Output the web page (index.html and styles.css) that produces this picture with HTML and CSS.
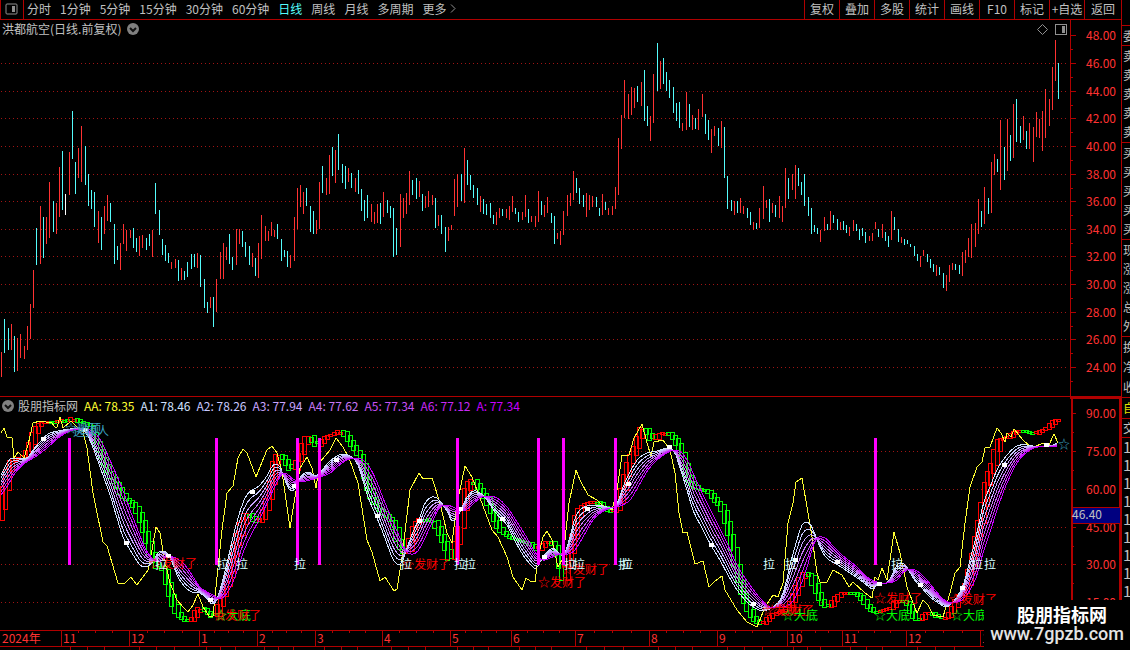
FILE: index.html
```html
<!DOCTYPE html>
<html lang="zh-CN">
<head>
    <meta charset="UTF-8">
    <meta name="viewport" content="width=device-width, initial-scale=1.0">
    <title>洪都航空 日线</title>
    <link rel="stylesheet" href="styles.css">
</head>
<body>
    <div class="app">
        <main class="main">
            <header class="toolbar">
                <button class="layout-btn" aria-label="布局">
                    <svg width="13" height="12" viewBox="0 0 13 12"><rect x="1" y="1" width="11" height="10" rx="1" class="icon-line"/><rect x="7" y="3" width="3" height="6" class="icon-fill"/></svg>
                </button>
                <nav class="periods">
                    <button>分时</button>
                    <button>1分钟</button>
                    <button>5分钟</button>
                    <button>15分钟</button>
                    <button>30分钟</button>
                    <button>60分钟</button>
                    <button class="active">日线</button>
                    <button>周线</button>
                    <button>月线</button>
                    <button>多周期</button>
                    <button class="more">更多<svg width="6" height="9" viewBox="0 0 6 9"><path d="M1 0.5L5 4.5L1 8.5" class="icon-line"/></svg></button>
                </nav>
                <div class="tools">
                    <button>复权</button>
                    <button>叠加</button>
                    <button>多股</button>
                    <button>统计</button>
                    <button>画线</button>
                    <button>F10</button>
                    <button>标记</button>
                    <button>+自选</button>
                    <button>返回</button>
                </div>
            </header>

            <section class="pane price-pane">
                <div class="pane-title">
                    <span>洪都航空(日线.前复权)</span>
                    <svg width="12" height="12" viewBox="0 0 12 12"><circle cx="6" cy="6" r="6" class="disc"/><path d="M3 5L6 8L9 5" class="disc-arrow"/></svg>
                </div>
                <svg id="price" class="chart" viewBox="0 20 1121 377"></svg>
            </section>

            <section class="pane">
                <div class="pane-title legend">
                    <svg width="12" height="12" viewBox="0 0 12 12"><circle cx="6" cy="6" r="6" class="disc"/><path d="M3 5L6 8L9 5" class="disc-arrow"/></svg>
                    <span class="name">股朋指标网</span>
                    <span class="val aa">AA: 78.35</span>
                    <span class="val a1">A1: 78.46</span>
                    <span class="val a2">A2: 78.26</span>
                    <span class="val a3">A3: 77.94</span>
                    <span class="val a4">A4: 77.62</span>
                    <span class="val a5">A5: 77.34</span>
                    <span class="val a6">A6: 77.12</span>
                    <span class="val a7">A: 77.34</span>
                </div>
                <svg id="indicator" class="chart" viewBox="0 397 1121 253"></svg>
            </section>
        </main>

        <aside class="side">
            <ul class="group first"><li>委</li></ul>
            <ul class="group"><li>卖</li><li>卖</li><li>卖</li><li>卖</li><li>卖</li></ul>
            <ul class="group"><li>买</li><li>买</li><li>买</li><li>买</li><li>买</li></ul>
            <ul class="group"><li>现</li><li>涨</li><li>涨</li><li>总</li><li>外</li></ul>
            <ul class="group stats"><li>换</li><li>净</li><li>收</li></ul>
            <ul class="group own"><li>自</li></ul>
            <ul class="group deal"><li>交</li></ul>
            <ul class="group ticks"><li>1</li><li>1</li><li>1</li><li>1</li><li>1</li><li>1</li><li>1</li><li>1</li><li>1</li></ul>
        </aside>

        <div class="watermark">
            <strong>股朋指标网</strong>
            <span>www.7gpzb.com</span>
        </div>
    </div>
    <script src="chart.js"></script>
</body>
</html>
```
FILE: styles.css
```css
* { box-sizing: border-box; }
body {
    margin: 0;
    background: #000;
    color: #c0c0c0;
    font-family: "Noto Sans CJK SC", sans-serif;
    font-size: 12px;
    line-height: 18px;
    overflow: hidden;
}
button {
    padding: 0;
    border: 0;
    background: none;
    color: inherit;
    font: inherit;
    white-space: nowrap;
    cursor: pointer;
}
button:hover { color: #fff; }
svg { display: block; }
.app { position: relative; display: flex; min-height: 100vh; }
.main { flex: 1; min-width: 0; }

/* toolbar */
.toolbar { display: flex; height: 20px; border-bottom: 1px solid #b00000; }
.toolbar button { padding-bottom: 2px; }
.toolbar .layout-btn {
    width: 24px;
    padding: 0 0 2px 4px;
    border-left: 1px solid #b00000;
    border-right: 1px solid #b00000;
}
.icon-line { fill: none; stroke: #909090; }
.icon-fill { fill: #909090; }
.periods { display: flex; gap: 9px; padding-left: 3px; }
.periods .active { color: #54fcfc; }
.more { display: flex; align-items: center; gap: 4px; }
.tools { display: flex; margin-left: auto; }
.tools button { width: 35px; border-left: 1px solid #b00000; }
.tools button:last-child { width: 37px; }

/* panes */
.pane { position: relative; }
.pane-title {
    position: absolute;
    top: 0;
    left: 2px;
    display: flex;
    align-items: center;
    gap: 6px;
    white-space: nowrap;
}
.disc { fill: #808080; }
.disc-arrow { fill: none; stroke: #101010; stroke-width: 2; }
.legend .name { margin-left: -2px; }
.legend { line-height: 17px; }
.val { min-width: 50px; }
.aa { color: #ffff32; }
.a1 { color: #d0e0ff; }
.a2 { color: #c8c8ff; }
.a3 { color: #c8a4ff; }
.a4 { color: #c878f4; }
.a5 { color: #c850f4; }
.a6 { color: #c828f4; }
.a7 { color: #c800ff; }

/* charts */
.chart { width: 100%; height: auto; overflow: hidden; }
.chart text { font-size: 12px; }
.chart path, .chart rect { shape-rendering: crispEdges; }
.grid { stroke: #a01414; stroke-dasharray: 1 3; fill: none; }
.frame { stroke: #b00000; fill: none; }
.frame.thick { stroke-width: 2; }
.axis-text { fill: #ff3232; }
.up { fill: #ff3232; }
.down { fill: #54fcfc; }
.flat { fill: #fff; }
.step-up { fill: none; stroke: #ff0000; }
.step-down { fill: none; stroke: #00ff00; }
.line { fill: none; stroke-width: 1; }
.signal { fill: #ff00ff; }
.marker { fill: #fff; }
.pull { fill: #d8ffff; }
.rich { fill: #ff0000; }
.bottom { fill: #00ff00; }
.top { fill: #3ca0c0; }
.gold { fill: #c08000; }
.cursor { fill: #000080; stroke: #b00000; }
.cursor-text { fill: #c0c0c0; }
.tool-icon { fill: none; stroke: #909090; }

/* quote strip */
.side {
    width: 9px;
    height: 650px;
    overflow: hidden;
    border-left: 1px solid #b00000;
}
.group {
    margin: 0;
    padding: 0 0 1px 1px;
    list-style: none;
    line-height: 19px;
    border-top: 1px solid #b00000;
}
.group.first { margin-top: 25px; padding-bottom: 0; }
.stats { line-height: 20px; padding-bottom: 0; }
.own { color: #e0e000; line-height: 20px; padding-bottom: 0; }
.deal { line-height: 18px; padding-bottom: 0; }
.ticks { line-height: 18px; font-size: 15px; }

.watermark {
    position: absolute;
    right: 0;
    bottom: 0;
    width: 146px;
    height: 50px;
    padding: 5px 6px 0 0;
    background: #000;
    color: #fff;
    text-align: right;
    line-height: 19px;
}
.watermark strong { display: block; padding-right: 17px; font-size: 18px; }
.watermark span { display: block; color: #e4e4e4; font: 500 18px/19px Roboto, sans-serif; }
```
FILE: chart.js
```js
const NS = 'http://www.w3.org/2000/svg';
const price = document.getElementById('price');
const indicator = document.getElementById('indicator');

function add(parent, tag, cls, attrs, text) {
    const el = document.createElementNS(NS, tag);
    el.setAttribute('class', cls);
    for (const key in attrs) el.setAttribute(key, attrs[key]);
    if (text) el.textContent = text;
    parent.appendChild(el);
    return el;
}

// daily ranges: x, u(p) / d(own) / f(lat), high, low
const bars = `1u352-377 4d319-353 8d328-350 11u324-350 14d336-372 17u338-371 20u334-358 24u346-359 27u326-350 30u304-339
33u270-308 36d228-265 40u206-264 43d217-258 46u217-244 49u182-238 53d201-232 56u203-234 59u167-217 62d151-210
65f194-215 69u152-195 72d111-159 75d162-194 78u148-178 81u126-182 85d146-185 88d174-206 91d190-209 94d192-227
98u211-243 101d217-250 104u206-234 107u195-221 110d203-222 114d224-264 117d246-260 120u243-270 123u224-244 126u230-251
130u230-238 133d228-248 136d238-252 139u236-256 142u235-248 146d238-250 149d234-246 152u230-257 155d183-214 159d210-235
162d239-255 165d245-261 168d253-263 171u262-269 175u259-268 178d260-281 181u268-280 184d271-280 187d262-277 191d254-269
194d254-267 197u253-268 200d255-287 204d279-308 207d302-313 210u297-308 213d297-327 216u279-312 220u252-279 223u243-279
226u247-260 229d234-264 232d257-270 236u229-265 239u229-244 242d231-247 245d242-257 249d246-265 252u253-267 255d258-276
258u243-278 261u215-259 265u226-241 268u231-241 271u222-236 274u230-237 277d224-239 281d239-261 284d250-257 287d251-267
290u255-268 294u217-261 297u188-229 300u185-207 303u192-214 306d188-206 310d206-232 313d211-234 316u220-234 319u182-229
322d166-193 326u178-195 329u155-194 332d147-176 335u150-183 338d134-170 342d164-183 345d166-189 348u168-182 351d173-188
355u178-192 358d170-194 361d189-211 364d200-221 367d195-218 371u204-222 374u212-224 377u204-223 380d203-224 383u192-217
387d200-213 390d206-218 393d208-257 396d228-255 400u194-247 403u198-218 406u193-214 409u171-205 412d180-195 416d178-199
419u181-197 422d194-211 425u196-208 428u191-207 432u195-205 435d198-228 438u215-226 441d215-234 445d227-252 448u227-241
451u225-230 454u179-216 457u174-207 461d174-201 464u148-203 467d160-185 470d175-190 473d185-198 477d188-205 480u196-212
483d199-214 486d204-215 490d203-218 493d215-224 496u212-225 499u208-218 502d209-216 506u209-218 509u206-220 512u196-212
515d208-214 518d212-222 522u212-220 525u195-217 528d209-223 531u216-222 535u216-227 538u191-222 541d201-215 544u205-217
547u197-213 551d213-223 554d216-244 557u233-239 560u231-245 563u211-235 567u195-216 570u193-206 573u171-200 576d178-193
579d188-204 583d195-207 586u193-217 589u195-210 592u196-207 596d197-207 599d208-216 602u194-215 605d202-210 608u208-215
612u206-215 615u187-209 618u138-195 621u115-149 624u80-118 628u94-119 631u87-115 634u88-108 637d86-102 641u82-106
644d70-121 647d106-126 650u116-141 653u74-123 657d43-91 660u61-89 663d58-84 666d72-91 669d80-98 673d87-113
676d103-121 679d102-128 682u123-131 686u92-130 689d104-127 692u115-130 695d118-129 698u109-130 702u94-117 705d114-134
708d120-140 711u129-153 714u126-136 718d128-146 721u121-148 724d127-178 727d176-209 731d200-211 734u201-215 737d201-213
740u198-213 743u206-214 747d208-218 750d212-225 753u222-230 756d223-229 759u208-228 763u186-219 766u200-208 769d199-222
772u203-213 775d205-217 779u196-218 782u206-222 785u168-208 788d178-199 792u174-190 795u165-199 798d168-186 801d182-195
804d174-206 808d197-216 811d208-234 814d225-232 817d228-234 820u230-242 824u217-231 827d224-230 830u211-230 833d215-223
837d219-230 840u222-230 843d221-230 846d225-233 849u227-236 853u220-231 856d224-231 859d229-240 862d228-236 865d232-243
869u236-241 872u233-241 875u222-229 878d229-237 882u224-238 885d232-241 888d236-247 891u211-240 894d217-230 898d229-242
901u237-243 904d239-245 907d240-244 910d244-247 914d246-256 917d254-261 920u256-267 923u250-256 927d254-262 930d259-268
933d264-272 936u265-276 939d267-275 943d273-288 946u275-291 949u265-282 952u263-270 955d264-270 959d265-274 962u252-276
965u250-263 968u238-257 971u224-258 975u223-247 978u199-234 981d211-227 984u187-224 988d198-214 991u162-213 994u154-175
997d159-172 1000u120-190 1004d147-180 1007u119-171 1010d135-161 1013u104-158 1016d99-142 1020d126-143 1023u116-140 1026d131-149
1029u123-149 1033u127-162 1036u112-137 1039u119-138 1042u111-151 1045u89-138 1049u99-126 1052u67-110 1055u40-81 1058d63-99`;

// price pane
const priceRows = [35, 63, 91, 118, 146, 174, 201, 229, 256, 284, 312, 339, 367];
priceRows.forEach((y, i) => {
    if (i) add(price, 'path', 'grid', { d: `M1 ${y + 0.5}H1067` });
    add(price, 'path', 'frame', { d: `M1070 ${y + 0.5}h6M1070 ${y + 14.5}h3` });
    add(price, 'text', 'axis-text', { x: 1116, y: y + 5, 'text-anchor': 'end' }, (48 - i * 2).toFixed(2));
});
add(price, 'path', 'frame', { d: 'M1070.5 20V396M0 396.5H1121' });

const kinds = { u: 'up', d: 'down', f: 'flat' };
bars.split(/\s+/).forEach(item => {
    const [, x, kind, high, low] = item.match(/(\d+)([udf])(\d+)-(\d+)/);
    add(price, 'rect', kinds[kind], { x, y: high, width: 1, height: low - high });
});
add(price, 'path', 'tool-icon', { d: 'M1042.5 24.5l5 5l-5 5l-5 -5z', style: 'shape-rendering: auto' });
add(price, 'rect', 'tool-icon', { x: 1055.5, y: 24.5, width: 11, height: 10, rx: 1 });
add(price, 'rect', 'icon-fill', { x: 1062, y: 26, width: 3, height: 7 });

// indicator pane
const fast = '1,475 5,467 10,459 15,458 27,458 33,450 42,440 48,434 58,431 70,429 80,429 86,433 92,445 100,467 110,495 117,518 123,537 132,553 140,565 145,567 152,563 157,554 161,551 167,553 172,562 178,577 185,587 192,592 200,593 207,599 212,604 216,602 220,590 227,563 233,537 238,518 245,498 252,490 258,487 267,476 273,465 277,464 280,467 287,485 291,491 295,489 300,478 305,473 310,472 315,476 320,473 328,463 337,456 343,454 350,456 357,463 362,477 368,497 377,518 385,538 392,557 397,564 402,562 407,548 413,532 420,517 425,503 432,497 437,498 443,505 448,513 452,521 457,518 462,507 467,497 473,491 480,493 487,500 495,512 507,525 513,537 523,555 532,566 536,569 540,562 547,552 553,548 557,551 562,556 565,553 570,537 575,518 580,510 587,506 595,505 603,506 613,508 618,502 623,487 630,472 638,459 647,453 657,451 668,448 675,453 680,468 687,490 693,510 702,528 712,547 720,560 728,575 737,590 747,602 755,608 763,611 773,607 780,600 785,587 790,565 797,540 802,525 807,522 812,527 817,540 823,553 828,559 838,565 850,573 863,582 873,589 877,584 887,583 892,575 897,565 902,563 907,567 913,578 922,588 930,597 940,604 947,607 953,602 960,592 965,580 970,560 977,533 983,505 990,487 998,468 1007,455 1017,446 1027,445 1040,447 1053,445 1059,442';
const slow = '1,495 8,485 15,473 25,463 35,457 47,448 58,438 70,431 80,429 90,430 97,435 103,445 113,467 122,488 130,510 137,528 145,548 152,558 158,562 167,557 173,557 182,562 190,572 200,587 213,595 220,599 227,593 235,577 243,553 250,537 260,518 270,497 277,482 283,473 287,474 293,479 300,482 310,480 320,477 330,473 338,466 347,460 357,458 363,460 370,468 377,482 383,498 393,522 400,538 405,550 410,554 417,552 423,542 430,527 438,510 445,505 453,507 463,511 472,505 480,498 487,496 497,498 507,507 517,522 527,538 535,552 542,560 550,558 560,554 568,554 575,550 583,537 593,520 602,512 610,508 620,506 630,500 638,487 648,470 657,460 667,453 675,450 682,453 688,462 697,482 707,503 717,523 727,543 738,567 750,585 760,598 770,607 782,607 792,602 800,587 807,567 812,550 817,538 825,538 833,546 842,555 857,567 867,577 877,582 887,583 897,580 903,573 910,569 917,571 925,578 935,590 943,599 952,603 962,600 970,590 977,575 983,553 990,532 998,507 1007,483 1017,463 1027,452 1037,447 1047,447 1059,446';
const aa = '1,433 4,428 7,437 12,438 14,458 18,452 24,458 28,445 33,423 40,421 52,423 55,427 57,427 60,417 63,428 71,421 77,427 83,432 87,448 93,493 103,542 107,546 118,583 125,583 131,577 137,585 143,577 148,570 152,550 156,527 160,533 164,557 170,583 177,600 183,607 188,612 193,605 198,594 203,607 209,616 213,616 217,577 222,530 227,493 233,486 238,458 243,449 247,453 256,477 262,462 267,450 272,446 277,453 282,472 290,528 295,497 300,468 307,457 312,468 316,488 320,462 330,450 336,438 343,447 349,458 358,483 367,540 372,552 380,581 385,577 394,591 397,589 402,557 410,490 419,473 423,479 432,478 440,503 447,533 452,543 457,503 461,485 465,466 472,477 480,498 492,530 498,537 507,557 513,577 522,590 526,578 530,581 535,582 538,557 543,537 547,531 552,540 558,567 563,558 569,503 576,470 580,480 588,495 597,500 602,505 612,510 617,490 622,455 629,455 634,438 642,424 647,443 651,456 654,442 663,440 670,450 675,473 679,513 683,533 687,532 695,564 703,561 709,587 715,581 722,576 725,590 737,610 747,622 757,627 765,607 773,595 778,597 783,583 788,523 793,503 796,482 802,478 807,507 812,537 817,573 820,582 827,582 833,570 842,575 849,587 853,582 865,593 872,598 875,577 878,580 882,568 887,580 891,553 894,532 900,553 907,587 917,613 923,600 928,605 933,615 943,617 950,593 955,573 960,567 965,523 970,487 977,467 982,462 985,448 990,447 997,428 1001,433 1005,442 1007,433 1011,437 1014,429 1023,440 1032,448 1043,443 1049,445 1054,434 1058,443';
const steps = '-3,520 1,500 4,480 8,463 11,459 20,457 24,453 28,445 33,430 37,424 45,421 55,421 62,419 66,422 72,417 76,421 84,423 88,427 93,440 100,457 107,472 115,485 122,497 130,503 137,515 143,533 149,553 155,567 161,567 165,582 170,600 176,614 182,619 187,621 192,616 197,607 203,610 208,614 213,617 217,606 222,590 228,572 232,550 238,530 243,514 248,514 253,521 258,521 262,512 268,490 273,460 277,454 283,460 287,467 291,471 294,463 298,455 302,443 307,434 311,441 315,446 319,441 325,436 333,433 338,430 342,433 350,445 358,457 363,475 368,493 375,506 383,514 391,523 396,540 402,553 407,548 411,530 415,522 420,518 427,521 433,521 435,527 440,538 445,550 450,562 454,545 460,515 464,490 470,479 475,485 479,491 485,500 490,512 497,528 505,535 515,540 527,543 536,550 540,545 547,541 552,545 557,560 562,580 566,560 570,545 575,515 581,505 588,502 597,502 602,508 608,511 612,511 616,505 620,490 626,465 634,445 640,427 644,430 648,437 651,441 655,435 663,432 668,434 675,443 680,457 686,477 695,488 705,490 713,500 720,508 725,525 730,545 735,570 740,592 747,610 753,620 760,624 766,618 775,612 783,610 790,600 796,585 802,572 806,574 809,576 815,592 822,605 828,606 834,597 843,592 852,592 856,594 865,605 872,612 880,610 890,607 893,601 905,603 912,617 918,620 922,614 930,612 934,616 945,617 950,610 957,596 963,590 968,570 974,540 980,510 985,480 991,463 997,440 1005,438 1012,432 1018,430 1024,431 1034,434 1037,431 1045,428 1053,420 1058,419';

const parse = text => text.split(' ').map(p => p.split(',').map(Number));

// smooth value of a point list at x
function valueAt(pts, x) {
    let i = 1;
    while (i < pts.length - 1 && pts[i][0] < x) i++;
    const a = pts[Math.max(i - 2, 0)], b = pts[i - 1], c = pts[i], d = pts[Math.min(i + 1, pts.length - 1)];
    const w = c[0] - b[0];
    const t = Math.min(1, Math.max(0, (x - b[0]) / w));
    const m1 = (c[1] - a[1]) / (c[0] - a[0]) * w;
    const m2 = (d[1] - b[1]) / (d[0] - b[0]) * w;
    const t2 = t * t, t3 = t2 * t;
    return (2 * t3 - 3 * t2 + 1) * b[1] + (t3 - 2 * t2 + t) * m1 + (3 * t2 - 2 * t3) * c[1] + (t3 - t2) * m2;
}

const rows = [413, 451, 489, 527, 564, 602];
rows.forEach((y, i) => {
    if (i) add(indicator, 'path', 'grid', { d: `M1 ${y + 0.5}H1067` });
    add(indicator, 'path', 'frame', { d: `M1072 ${y + 0.5}h4M1072 ${y + 19.5}h2` });
    add(indicator, 'text', 'axis-text', { x: 1116, y: y + 5, 'text-anchor': 'end' }, (90 - i * 15).toFixed(2));
});

// stepped boxes
const stepPts = parse(steps);
for (let x = 1; x < 1058; x += 3.25) {
    const now = valueAt(stepPts, x + 2), prev = valueAt(stepPts, x - 5);
    const top = Math.round(Math.min(now, prev)), low = Math.round(Math.max(now, prev));
    add(indicator, 'rect', now <= prev ? 'step-up' : 'step-down', {
        x: Math.round(x) - 0.5, y: top + 0.5, width: 4, height: Math.max(low - top, 2)
    });
}

add(indicator, 'polyline', 'line', { points: aa, stroke: '#ffff32', 'shape-rendering': 'crispEdges' });

const colors = ['#d0e0ff', '#c8c8ff', '#c8a4ff', '#c878f4', '#c850f4', '#c828f4', '#c800ff'];
const fastPts = parse(fast), slowPts = parse(slow);
colors.forEach((stroke, k) => {
    const pts = [];
    for (let x = 1; x <= 1058; x += 3) {
        const a = valueAt(fastPts, x), b = valueAt(slowPts, x);
        pts.push(x + ',' + (a + (b - a) * k / 6).toFixed(1));
    }
    add(indicator, 'polyline', 'line', { points: pts.join(' '), stroke, 'shape-rendering': 'crispEdges' });
});

parse('43,439 85,430 126,543 168,556 210,600 252,492 294,486 336,460 377,516 419,521 460,509 502,519 544,557 587,509 628,484 669,447 711,545 753,604 795,560 837,562 879,584 920,585 962,588 1004,465 1046,445').forEach(([x, y]) => {
    add(indicator, 'rect', 'marker', { x: x - 2, y: y - 2, width: 5, height: 4 });
});

[68, 215, 296, 318, 456, 537, 562, 614, 874].forEach(x => {
    add(indicator, 'rect', 'signal', { x, y: 438, width: 3, height: 127 });
});

const notes = [
    ['rich', 149, 568, '☆发财了'],
    ['bottom', 215, 620, '☆大底'],
    ['rich', 213, 620, '☆发财了'],
    ['gold', 215, 620, '☆'],
    ['rich', 402, 569, '☆发财了'],
    ['rich', 538, 587, '☆发财了'],
    ['rich', 561, 574, '☆发财了'],
    ['rich', 762, 615, '☆发财了'],
    ['rich', 766, 615, '☆发财了'],
    ['bottom', 782, 620, '☆大底'],
    ['rich', 874, 603, '☆发财了'],
    ['bottom', 874, 620, '☆大底'],
    ['rich', 949, 604, '☆发财了'],
    ['bottom', 951, 620, '☆大底'],
    ['top', 65, 433, '☆逃顶'],
    ['top', 73, 436, '逃顶人'],
    ['top', 1058, 449, '☆']
];
notes.forEach(([cls, x, y, text]) => add(indicator, 'text', cls, { x, y }, text));
[155, 217, 236, 294, 400, 454, 464, 564, 573, 618, 621, 763, 785, 891, 971, 984].forEach(x => {
    add(indicator, 'text', 'pull', { x, y: 569 }, '拉');
});

// frame and cursor value
add(indicator, 'path', 'frame thick', { d: 'M1072 397V630M1070 398H1121M1120 397V630' });
add(indicator, 'rect', 'cursor', { x: 1072.5, y: 507.5, width: 48, height: 16 });
add(indicator, 'text', 'cursor-text', { x: 1072, y: 519 }, '46.40');

// time axis
add(indicator, 'path', 'frame', { d: 'M0 630.5H1121M0 646.5H1121' });
const months = [[0, '2024年'], [61, '11'], [129, '12'], [199, '1'], [257, '2'], [315, '3'], [382, '4'], [450, '5'], [511, '6'], [575, '7'], [649, '8'], [717, '9'], [787, '10'], [842, '11'], [906, '12'], [980, '1']];
months.forEach(([x, label], i) => {
    if (i) add(indicator, 'path', 'frame', { d: `M${x + 0.5} 631V646` });
    add(indicator, 'text', 'axis-text', { x: x + 2, y: 643 }, label);
    const next = i < months.length - 1 ? months[i + 1][0] : 1050;
    for (let k = 1; i && k < 4; k++) {
        const tx = Math.round(x + (next - x) * k / 4) + 0.5;
        add(indicator, 'path', 'frame', { d: `M${tx} 631v2M${tx - 8} 647v3` });
    }
});
```
